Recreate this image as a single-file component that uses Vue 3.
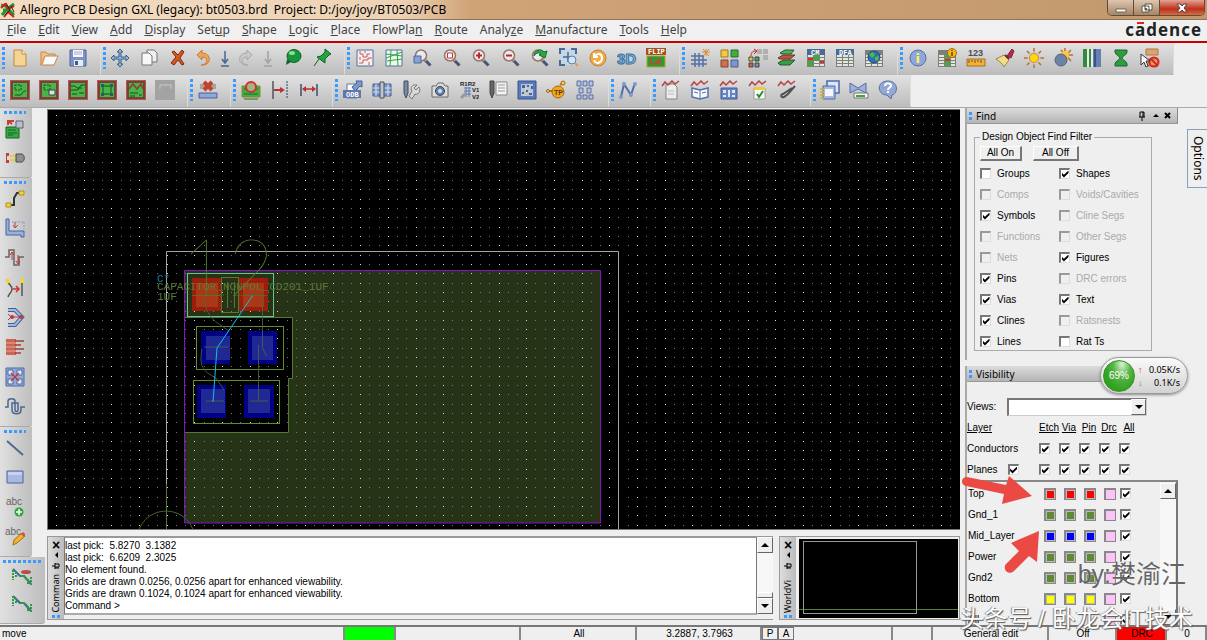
<script setup>
import { ref } from 'vue'

const menus = [
    ['', 'F', 'ile'], ['', 'E', 'dit'], ['', 'V', 'iew'], ['', 'A', 'dd'], ['', 'D', 'isplay'],
    ['Set', 'u', 'p'], ['', 'S', 'hape'], ['', 'L', 'ogic'], ['', 'P', 'lace'], ['FlowPla', 'n', ''],
    ['', 'R', 'oute'], ['Analy', 'z', 'e'], ['', 'M', 'anufacture'], ['', 'T', 'ools'], ['', 'H', 'elp']
]

// shared pieces of the icons, all on a 20 x 20 grid
const lens = '<path d="M11.5 11.5l6 6" stroke="#3f567f" stroke-width="3"/><path d="M12 11l1.5 1.5" stroke="#e8a050" stroke-width="3"/><circle cx="8" cy="7.5" r="5.5" fill="#e3ecf5" stroke="#9a7464" stroke-width="1.5"/>'
const board = '<path d="M0 0h20v20H0z" fill="#b5564c"/><path d="M1 1h18v18H1z" fill="#71433a"/><path d="M3 3h14v14H3z" fill="#49b549"/>'
const table = '<path d="M1 2h18v17H1z" fill="#7b8179"/><path d="M2 7h5v2H2zm6 0h5v2H8zm6 0h4v2h-4zM2 10h5v2H2zm6 0h5v2H8zm6 0h4v2h-4zM2 13h5v2H2zm6 0h5v2H8zm6 0h4v2h-4zM2 16h5v2H2zm6 0h5v2H8zm6 0h4v2h-4z" fill="#e4e5df"/>'
const wave = '<path d="M1 6l3-4 3 3 4-4 3 3 4-3" fill="none" stroke="#b8444a" stroke-width="1.5"/>'

const icons = {
    new: '<path d="M4 2h8l4 4v12H4z" fill="#f7d493" stroke="#b98b42"/><path d="M12 2v4h4" fill="#fff3d6" stroke="#b98b42"/>',
    open: '<path d="M2 17V4h5l2 2h7v3" fill="#f2c084" stroke="#c18b51"/><path d="M2 17L6 8h13l-4 9z" fill="#f9fafa" stroke="#bd8653"/><path d="M3 16L5 10" stroke="#ee9e47" stroke-width="2"/>',
    save: '<path d="M2 2h16v16H2z" fill="#7d93c8" stroke="#4c6395"/><path d="M5 2h10v7H5z" fill="#f5f7fb"/><path d="M6 4h8M6 6h8" stroke="#aab"/><path d="M6 12h9v6H6z" fill="#e7ebf4"/><path d="M7 13h3v4H7z" fill="#455b87"/>',
    move: '<path d="M10 1l3 3h-2v5h5V7l3 3-3 3v-2h-5v5h2l-3 3-3-3h2v-5H4v2l-3-3 3-3v2h5V4H7z" fill="#8fb4dc" stroke="#3f608a"/>',
    copy: '<path d="M8 2h7l3 3v9H8z" fill="#eee" stroke="#777"/><path d="M3 5h7l3 3v9H3z" fill="#f8f8f8" stroke="#777"/>',
    delete: '<path d="M4 4l2-1 4 4 4-5 2 2-4 6 4 6-2 1-4-5-4 5-3-2 5-6z" fill="#d4571c" stroke="#7e2a0b"/>',
    undo: '<path d="M8 17c7 0 8-8 1-8v3L4 7l5-5v3c10 0 10 13-1 12z" fill="#f0a15a" stroke="#c77a38"/>',
    undoDown: '<path d="M10 3v11M7 11l3 4 3-4M6 18h8" fill="none" stroke="#45678d" stroke-width="1.5"/>',
    redo: '<path d="M12 17c-7 0-8-8-1-8v3l5-5-5-5v3C1 5 1 18 12 17z" fill="#c9c9c9" stroke="#a7a7a7"/>',
    redoDown: '<path d="M10 3v11M7 11l3 4 3-4M6 18h8" fill="none" stroke="#a3a3a3" stroke-width="1.5"/>',
    ball: '<ellipse cx="11" cy="8" rx="7" ry="6.5" fill="#16963a" stroke="#08641e"/><ellipse cx="9" cy="5" rx="3" ry="2" fill="#8bdc92"/><path d="M3 17l5-3-4-3z" fill="#175f24"/>',
    pin: '<path d="M2 18l5-7M13 1l6 5-2 1-4 4v4L5 9l4-1 4-4z" fill="#22a53e" stroke="#0c6020"/>',
    gridRed: '<path d="M2 2h16v16H2z" fill="#f6efef" stroke="#52709d"/><path d="M5 3v3h3v3h4V6h3M4 15h4v-3h5v-2h4M14 17v-3M5 9v3M10 3v2" fill="none" stroke="#c8595c"/>',
    gridGreen: '<path d="M2 2h16v16H2z" fill="#effaee" stroke="#52709d"/><path d="M2 6l16 2M3 13l15-2M7 2l-1 16M13 2l1 16M2 10l16-6" fill="none" stroke="#2ea147"/>',
    zoomRegion: lens + '<path d="M1 8h7v7H1z" fill="#89a2d3" stroke="#4c679d"/>',
    zoomFit: lens + '<path d="M5.500 5h5v5h-5z" fill="#fff" stroke="#c33"/>',
    zoomIn: lens + '<path d="M5 7.500h6M8 4.500v6" stroke="#cc2222" stroke-width="2"/>',
    zoomOut: lens + '<path d="M5 7.500h6" stroke="#cc2222" stroke-width="2"/>',
    zoomPrev: lens + '<path d="M4 8c0-6 7-8 10-4l3-1-2 7-6-3 2-1c-2-2-5-1-7 2z" fill="#2ba64a" stroke="#12702b"/>',
    zoomCenter: '<path d="M1 1h17v16H1z" fill="#c4d5e6"/><path d="M1 6V1h5M12 1h5v5M1 12v5h5" fill="none" stroke="#466b95" stroke-width="2"/><path d="M9 4v10M4 9h10" stroke="#466b95" stroke-width="1.500"/><circle cx="13" cy="12" r="4" fill="#cfe5f8" stroke="#5c7fa8"/><path d="M16 15l3 3" stroke="#e19a4b" stroke-width="2"/>',
    refresh: '<circle cx="10" cy="10" r="8" fill="#f2aa45" stroke="#c57d32"/><path d="M6 12c2 5 8 3 8-2s-5-5-7-2M6 5v4h4" fill="none" stroke="#fff" stroke-width="2"/>',
    threeD: '<text x="0" y="16" font-family="Liberation Sans" font-size="15" font-weight="700" fill="#8dbfe8" stroke="#39719f">3D</text>',
    flip: '<path d="M0 0h20v7H0z" fill="#a0521f"/><text x="2" y="6" font-family="Liberation Mono" font-size="7" font-weight="700" fill="#fff">FLIP</text><path d="M1 8h18v11H1z" fill="#2c9b35" stroke="#b8a12a"/><path d="M5 10v3c0 4 8 4 9 0M14 10v4h-4" fill="none" stroke="#d53c30" stroke-width="1.500"/>',
    gridStar: '<path d="M5 5v14M9 5v14M13 7v12M1 8h13M1 12h16M1 16h16" stroke="#5671a5" stroke-width="1.500"/><path d="M16 1v7M12 4h8M13 1l6 7M19 1l-6 7" stroke="#d38a3a"/>',
    squares: '<path d="M2 2h7v7H2z" fill="#f6ca35" stroke="#9a7b2c"/><path d="M12 2h7v7h-7z" fill="#3faf3d" stroke="#2b6a2a"/><path d="M2 12h7v7H2z" fill="#cf714f" stroke="#81452f"/><path d="M12 12h7v7h-7z" fill="#7d95cb" stroke="#4b5f90"/>',
    swap: '<path d="M9 1h5v5H9zM15 1h5v5h-5zM15 7h5v5h-5z" fill="#b0b0b0"/><path d="M1 9h4v4H1z" fill="#e7c33f" stroke="#444"/><path d="M7 9h4v4H7z" fill="#45a344" stroke="#444"/><path d="M1 15h4v4H1z" fill="#cc6348" stroke="#444"/><path d="M7 15h4v4H7z" fill="#7790c5" stroke="#444"/><path d="M3 8c0-4 2-5 5-5M6 1l3 2-3 3" fill="none" stroke="#c22"/>',
    layers: '<path d="M1 15l5-3h12l-5 5H3z" fill="#399c42" stroke="#315532"/><path d="M1 10l5-3h12l-5 4H3z" fill="#c5523d" stroke="#6b3527"/><path d="M3 5l5-3h9l-3 4H5z" fill="#4eb556" stroke="#275f2b"/>',
    cm: table + '<path d="M1 1h18v6H1z" fill="#496b94"/><path d="M2 10h5v2H2zM14 13h4v2h-4z" fill="#e22"/><path d="M2 13h5v5H2zM8 7h5v5H8z" fill="#3cab3c"/><text x="5" y="7" font-family="Liberation Mono" font-size="7" font-weight="700" fill="#fff">CM</text>',
    dfa: table + '<path d="M1 1h18v6H1z" fill="#496b94"/><text x="4" y="7" font-family="Liberation Mono" font-size="7" font-weight="700" fill="#fff">DFA</text>',
    globe: table + '<circle cx="10" cy="9" r="6" fill="#2b71b5" stroke="#1c4a79"/><path d="M5 6l4-2 2 3-3 3zM11 9l4-1-1 5-3-1z" fill="#4eba4e"/>',
    info: '<circle cx="10" cy="10" r="8" fill="#8ea6dc" stroke="#586f9e"/><path d="M10 5v2M10 8v7" stroke="#fff06a" stroke-width="2.500"/>',
    tableInfo: table + '<path d="M8 7h5v11H8z" fill="#49a449"/><path d="M8 11h5v2H8z" fill="#dc3030"/><circle cx="15" cy="5" r="4.500" fill="#f7b61c" stroke="#a96c10"/><path d="M15 2v1M15 4v4" stroke="#734200" stroke-width="1.500"/>',
    measure: '<text x="2" y="8" font-family="Liberation Sans" font-size="9" font-weight="700" fill="#4e4e4e">123</text><path d="M1 11h18v7H1z" fill="#f3b13d" stroke="#a66e21"/><path d="M3 12v3M6 12v2M9 12v3M12 12v2M15 12v3" stroke="#764c12"/>',
    brush: '<path d="M12 8l5-7 2 2-3 7z" fill="#b7294c" stroke="#85203a"/><path d="M1 11l8-4 5 5-5 7c-1-3-4-5-8-8z" fill="#f1df84" stroke="#98874c"/><path d="M10 7l4 4" stroke="#72243a" stroke-width="2"/>',
    sun: '<path d="M10 0v20M0 10h20M3 3l14 14M17 3L3 17" stroke="#b8702f" stroke-width="1.500"/><circle cx="10" cy="10" r="6.500" fill="#ccc"/><circle cx="10" cy="10" r="4.500" fill="#ffd51c" stroke="#ce8f21"/>',
    sunDim: '<path d="M12 0v14M5 7h15M8 2l10 11M18 2L8 12" stroke="#b8702f" stroke-width="1.500"/><circle cx="12" cy="7" r="4" fill="#ffc738"/><circle cx="8" cy="12" r="6" fill="#6d82a5" stroke="#52647f"/>',
    stripes: '<path d="M1 1h18v18H1z" fill="#6580b3"/><path d="M1 1h4v18H1zM7 1h2v18H7z" fill="#318a40"/><path d="M5 1h2v18H5zM9 1h2v18H9z" fill="#e5ece4"/><path d="M13 1v18" stroke="#3d5482" stroke-width="2"/>',
    hourglass: '<path d="M4 2h12v2c0 3-5 4-5 6s5 3 5 6v2H4v-2c0-3 5-4 5-6S4 7 4 4z" fill="#2e9d40" stroke="#17662a"/>',
    noSelect: '<path d="M6 1h12v6H6zM8 11h10v7H8z" fill="#d9a76b" stroke="#ab7547"/><circle cx="14" cy="14" r="4.500" fill="none" stroke="#e22020" stroke-width="2"/><path d="M11 11l6 6" stroke="#e22020" stroke-width="2"/><path d="M1 6v11l3-3 2 5 2-1-2-5h4z" fill="#fff" stroke="#333"/>',
    b1: board + '<path d="M5 5h6v5H5z" fill="none" stroke="#174e1a" stroke-dasharray="2 1"/><path d="M5 15h5c3 0 1-4 6-4" fill="none" stroke="#174e1a"/>',
    b2: board + '<path d="M5 5h6v5H5z" fill="none" stroke="#174e1a" stroke-dasharray="2 1"/><path d="M10 10h6v5h-6z" fill="#dde0df" stroke="#3b4743"/>',
    b3: board + '<path d="M3 6h4l2 2h5M3 10h7l3-5h4M4 14h5M11 13h5" fill="none" stroke="#174e1a"/>',
    b4: board + '<path d="M6 6h8v8H6z" fill="none" stroke="#174e1a"/><path d="M4 4h3v3H4zM13 4h3v3h-3zM4 13h3v3H4zM13 13h3v3h-3z" fill="#2a5a5d"/>',
    b5: board + '<path d="M3 9l4-5 4 5 4-5 2 5" fill="none" stroke="#8e3b32" stroke-width="1.500"/><path d="M4 13h8M13 15h3M4 16h5" stroke="#174e1a"/>',
    blank: '<path d="M0 0h20v20H0z" fill="#a3a3a3"/><path d="M5 9V5h11v4" fill="none" stroke="#c6c6c6"/>',
    dropShape: '<path d="M2 4h16v5H2z" fill="#a3a3a3"/><path d="M6 2l8 8M14 2l-8 8" stroke="#c2422b" stroke-width="4"/><path d="M1 13h18v5H1z" fill="#92a7d9" stroke="#4b629a"/>',
    boardProbe: '<path d="M1 6h18v11H1z" fill="#3fae43" stroke="#8c8b2a"/><path d="M3 19h14M3 9h14M3 14h14" stroke="#217028"/><circle cx="10" cy="7" r="5" fill="#a5b381" stroke="#d03030" stroke-width="2"/>',
    toLine: '<path d="M3 1v18" stroke="#555" stroke-width="1.500"/><path d="M17 1v18" stroke="#27405f" stroke-dasharray="2 1"/><path d="M4 10h9" stroke="#b93131" stroke-width="2"/><path d="M10 7l5 3-5 3z" fill="#b93131"/>',
    width: '<path d="M2 4v12M18 4v12" stroke="#38506f" stroke-width="1.500"/><path d="M4 9h12" stroke="#b93131" stroke-width="1.500"/><path d="M7 6L3 9l4 3zM13 6l4 3-4 3z" fill="#b93131"/>',
    odb: '<path d="M4 4h10v14H4z" fill="#fafafa" stroke="#65799c"/><path d="M9 7l5-4-1-2h6v6l-2-1-5 5z" fill="#7b9ac9" stroke="#466192"/><path d="M0 10h18v8H0z" fill="#5d79ab"/><text x="3" y="17" font-family="Liberation Mono" font-size="7" font-weight="700" fill="#fff">ODB</text>',
    columns: '<path d="M1 4h18v12H1z" fill="#7d94c6" stroke="#45608f"/><path d="M1 8h18M1 12h18M4 4v12M16 4v12" stroke="#d4dff4"/><path d="M8 2h4v16H8z" fill="#bdc6d0" stroke="#48515e"/>',
    tools: '<path d="M3 1h4v12l-2 5-2-5z" fill="#788aa7" stroke="#434c5d"/><path d="M18 7l-3 3-2-2 3-3c-5-1-7 3-5 6l-3 5 3 3 3-5c4 1 6-3 4-7z" fill="#d9d9d9" stroke="#787878"/>',
    camera: '<path d="M2 6h4l2-3h5l2 3h3v11H2z" fill="#dcdcdc" stroke="#686868"/><circle cx="10" cy="11" r="4.500" fill="#6482af" stroke="#3d4650"/><circle cx="10" cy="11" r="2" fill="#cfe4fa"/>',
    rename: '<text x="1" y="6" font-family="Liberation Sans" font-size="6" font-weight="700" fill="#222">R1R2</text><path d="M5 8h7M5 11h7M5 14h7M7 7v10M10 7v10" stroke="#5777b8"/><path d="M2 18l5-5" stroke="#999" stroke-width="3"/><text x="13" y="12" font-family="Liberation Sans" font-size="6" font-weight="700" fill="#222">V1</text><text x="13" y="19" font-family="Liberation Sans" font-size="6" font-weight="700" fill="#222">V2</text>',
    report: '<path d="M2 1h4v12l-2 5-2-5z" fill="#666" stroke="#444"/><path d="M8 2h11v13H8z" fill="#f4f4f4" stroke="#888"/><path d="M10 5h7M10 8h7M10 11h7" stroke="#999"/>',
    maze: '<path d="M1 1h18v18H1z" fill="#5a79b8" stroke="#38558f"/><path d="M4 4h12v12H4z" fill="#b9c6de"/><path d="M5 5h3v3H5zm5 0h2v2h-2zm4 1h2v3h-2zm-5 4h2v2H9zm-4 2h2v2H5zm7 1h3v2h-3z" fill="#4c6494"/><path d="M8 8h2v2H8zm4 3h2v1h-2zM6 15h3v1H6z" fill="#e8d87c"/>',
    testPoint: '<path d="M0 11h8M14 5l4-3" stroke="#b56f1d" stroke-width="2"/><circle cx="12" cy="12" r="6" fill="#f0a91f" stroke="#a86512"/><circle cx="17" cy="3" r="2" fill="#ffd24a" stroke="#a86512"/><circle cx="2" cy="11" r="1.500" fill="#ffd24a" stroke="#a86512"/><text x="8" y="15" font-family="Liberation Sans" font-size="7" font-weight="700" fill="#603600">TP</text>',
    array: '<path d="M2 1h4v5H2zm6 0h4v5H8zm6 0h4v5h-4zM4 8h4v5H4zm8 0h4v5h-4zM2 15h4v4H2zm6 0h4v4H8zm6 0h4v4h-4z" fill="#b3c2e6" stroke="#5a6f9c"/>',
    net: '<path d="M3 17L6 4l7 11 4-12" fill="none" stroke="#516fa9" stroke-width="2"/><circle cx="3" cy="17" r="2" fill="#7f9bd2"/><circle cx="6" cy="4" r="2" fill="#7f9bd2"/><circle cx="13" cy="15" r="2" fill="#7f9bd2"/><circle cx="17" cy="4" r="2" fill="#7f9bd2"/>',
    waveDoc: '<path d="M5 4h8l3 3v12H5z" fill="#ececec" stroke="#848484"/><path d="M7 11h6M7 14h6" stroke="#bbb"/>' + wave,
    waveBook: '<path d="M2 8l8 2 8-2v9l-8 2-8-2z" fill="#f6f8fc" stroke="#5471a8" stroke-width="1.500"/><path d="M10 10v8M4 12l4 1M12 13l4-1" stroke="#5471a8"/>' + wave,
    waveFilm: '<path d="M2 8h16v11H2z" fill="#6886c6" stroke="#415c91"/><path d="M4 10h3v3H4zm5 0h2v7H9zm4 0h3v3h-3zM4 15h3v2H4zm9 0h3v2h-3z" fill="#dce7fb"/>' + wave,
    waveCheck: '<path d="M6 8h11v11H6z" fill="#fbfbf3" stroke="#999"/><path d="M6 7h11v3H6z" fill="#f0c940"/><path d="M9 14l2 3 4-6" fill="none" stroke="#278d35" stroke-width="2"/>' + wave,
    waveProbe: '<path d="M18 6l-7 8-4 3c-3 1-4-2-1-3l9-6" fill="none" stroke="#505050" stroke-width="2"/>' + wave,
    windows: '<path d="M7 1h12v12H7z" fill="#dce5f7" stroke="#4d6aa4" stroke-width="1.500"/><path d="M3 6h12v13H3z" fill="#a8b9df" stroke="#4d6aa4"/><path d="M5 9h8v7H5z" fill="#f4f6fc"/><path d="M0 9h4M0 12h4M0 15h4M0 18h4" stroke="#d3aa30" stroke-width="1.500"/>',
    bowtie: '<path d="M1 3l8 5 8-5v10l-8-4-8 4z" fill="#9cb1de" stroke="#57719f"/><path d="M5 13h14v5H5z" fill="#f5f5f5" stroke="#777"/><path d="M7 15h9v2H7z" fill="#38a841"/>',
    help: '<path d="M10 1c11 0 10 13 4 14l-1 4-4-4C-1 15-2 1 10 1z" fill="#93a8d6" stroke="#566f9f"/><path d="M7 6c0-4 7-3 6 0-1 2-3 2-3 4M10 11v2" fill="none" stroke="#fff" stroke-width="2"/>',
    placeManual: '<path d="M1 8h13v11H1z" fill="#36a845" stroke="#1d6228"/><path d="M3 11h8M3 14h9M3 16h5" stroke="#1d6228"/><path d="M11 2h7v7h-7z" fill="#b8c0cb" stroke="#5b6573"/><path d="M3 6V2h6M3 2l4 3" fill="none" stroke="#c33f35" stroke-width="2"/>',
    plug: '<path d="M1 5h3v3H2v4h2v3H1z" fill="#c23f3d"/><path d="M5 8h6M5 12h6" stroke="#eccb3c" stroke-width="2"/><path d="M11 6h6c3 1 3 7 0 8h-6z" fill="#8f8f8f" stroke="#494949"/>',
    connect: '<path d="M4 16h5V9l3-5h5" fill="none" stroke="#333" stroke-width="2"/><path d="M1 14h5v4H1zM14 2h5v4h-5z" fill="#f3d335" stroke="#b09018"/>',
    slide: '<path d="M1 1h3v12h15v6h-3v-2H1z" fill="#9bafdd" stroke="#47669d"/><path d="M7 4h12v7" fill="none" stroke="#8796c2" stroke-dasharray="2 1"/><path d="M10 4v6M8 7l2 3 3-3" fill="none" stroke="#b14454"/>',
    delay: '<path d="M0 9h4V2h5v15h5V9h5" fill="none" stroke="#666" stroke-width="1.500"/><path d="M7 12V5M13 7v7M5 7l2-3 2 3M11 13l2 3 2-3" fill="none" stroke="#bf3434"/>',
    spread: '<path d="M3 3c1 5 4 4 4 8s-3 4-4 8M17 3v15" fill="none" stroke="#555" stroke-width="1.500"/><path d="M8 11h6M11 8l3 3-3 3" fill="none" stroke="#c33" stroke-width="1.500"/><path d="M1 1h4v4H1zM15 1h4v4h-4z" fill="#f3d335"/>',
    bend: '<path d="M3 3h7l7 7-7 8H3" fill="none" stroke="#436291" stroke-width="4"/><path d="M3 3h7l7 7-7 8H3" fill="none" stroke="#a4b8e3" stroke-width="2"/><path d="M3 7l3 3-3 3M6 10h9" fill="none" stroke="#bd3644"/><circle cx="7" cy="10" r="2" fill="#bd3644"/><circle cx="16" cy="10" r="2" fill="#bd3644"/>',
    fanout: '<path d="M1 2h10v16H1z" fill="#cb6553"/><path d="M10 4h9M10 8h6M10 12h9M10 16h6" stroke="#a2402e" stroke-width="1.500"/><path d="M1 6h10M1 10h10M1 14h10" stroke="#e0a79a"/>',
    spider: '<path d="M1 1h18v18H1z" fill="#91a9db" stroke="#4d6b9f"/><path d="M3 3h5v5H3zm9 0h5v5h-5zM3 12h5v5H3zm9 0h5v5h-5z" fill="#e3e9f6" stroke="#4d6b9f"/><path d="M6 6l8 8M14 6l-8 8" stroke="#c43939" stroke-width="1.500"/>',
    snake: '<path d="M0 11h3V5c0-3 7-3 7 0v9c0 2 3 2 3 0V7H7v7c0 5 9 5 9 0v-3h4" fill="none" stroke="#4b678e" stroke-width="1.500"/>',
    line: '<path d="M2 3l16 14" stroke="#4f6993" stroke-width="2"/>',
    rect: '<path d="M2 4h16v12H2z" fill="#a9b9e2" stroke="#4c6599"/><path d="M3 5h14v3H3z" fill="#c7d2ef"/>',
    textAdd: '<text x="1" y="8" font-family="Liberation Sans" font-size="10" fill="#666">abc</text><circle cx="14" cy="15" r="4.500" fill="#2ea43a"/><path d="M11 15h6M14 12v6" stroke="#fff" stroke-width="1.500"/>',
    textEdit: '<text x="0" y="9" font-family="Liberation Sans" font-size="10" fill="#666">abc</text><path d="M8 19l1-5 8-7 3 3-8 7z" fill="#f3b52a" stroke="#a86c18"/><path d="M17 7l3 3" stroke="#d4504a" stroke-width="3"/>',
    ratOn: '<path d="M1 2l7 7h4l7 8" fill="none" stroke="#4a66a0" stroke-width="2"/><path d="M8 9h4l3 4" fill="none" stroke="#2f9b43" stroke-width="2"/><path d="M1 3v10M4 5v5M19 10v9M16 12v6" stroke="#2f9b43" stroke-width="2" stroke-dasharray="2 1"/><ellipse cx="14" cy="5" rx="5" ry="2" fill="#bd4a44"/>',
    ratOff: '<path d="M1 2l7 7h4l7 8" fill="none" stroke="#2f9b43" stroke-width="2"/><path d="M2 3l6 6M13 10l5 6" stroke="#4a66a0" stroke-width="2"/><path d="M1 2v10M4 4v5M19 10v9M16 12v6" stroke="#2f9b43" stroke-width="2" stroke-dasharray="2 1"/>'
}

const narrow = ['undo', 'undoDown', 'redo', 'redoDown']

const toolbars = [
    [
        { width: 101, items: ['new', 'open', 'save'] },
        { width: 244, items: ['move', 'copy', 'delete', 'undo', 'undoDown', 'redo', 'redoDown', 'ball', 'pin'] },
        { width: 335, items: ['gridRed', 'gridGreen', 'zoomRegion', 'zoomFit', 'zoomIn', 'zoomOut', 'zoomPrev', 'zoomCenter', 'refresh', 'threeD', 'flip'] },
        { width: 218, items: ['gridStar', 'squares', 'swap', 'layers', 'cm', 'dfa', 'globe'] },
        { width: 276, items: ['info', 'tableInfo', 'measure', 'brush', 'sun', 'sunDim', 'stripes', 'hourglass', 'noSelect'] }
    ],
    [
        { width: 188, items: ['b1', 'b2', 'b3', 'b4', 'b5', 'blank'] },
        { width: 43, items: ['dropShape'] },
        { width: 102, items: ['boardProbe', 'toLine', 'width'] },
        { width: 276, items: ['odb', 'columns', 'tools', 'camera', 'rename', 'report', 'maze', 'testPoint', 'array'] },
        { width: 42, items: ['net'] },
        { width: 160, items: ['waveDoc', 'waveBook', 'waveFilm', 'waveCheck', 'waveProbe'] },
        { width: 100, items: ['windows', 'bowtie', 'help'] }
    ]
]

const sideGroups = [
    { height: 70, items: ['placeManual', 'plug'] },
    { height: 249, items: ['connect', 'slide', 'delay', 'spread', 'bend', 'fanout', 'spider', 'snake'] },
    { height: 130, items: ['line', 'rect', 'textAdd', 'textEdit'] },
    { height: 67, wide: true, items: ['ratOn', 'ratOff'] }
]

// drawing grid, every third column is a little brighter
function gridPath(bright) {
    let d = ''
    for (let col = 0; col < 98; col++) {
        if ((col % 3 === 0) !== bright) continue
        for (let row = 0; row < 45; row++) {
            d += `M${8 + Math.round(col * 9.22)} ${5.5 + Math.round(row * 9.31)}h1`
        }
    }
    return d
}
const dimDots = gridPath(false)
const brightDots = gridPath(true)

const filters = ref([
    { name: 'Groups', on: false }, { name: 'Shapes', on: true },
    { name: 'Comps', off: true }, { name: 'Voids/Cavities', off: true },
    { name: 'Symbols', on: true }, { name: 'Cline Segs', off: true },
    { name: 'Functions', off: true }, { name: 'Other Segs', off: true },
    { name: 'Nets', off: true }, { name: 'Figures', on: true },
    { name: 'Pins', on: true }, { name: 'DRC errors', off: true },
    { name: 'Vias', on: true }, { name: 'Text', on: true },
    { name: 'Clines', on: true }, { name: 'Ratsnests', off: true },
    { name: 'Lines', on: true }, { name: 'Rat Ts', on: false }
])

const columns = ['Etch', 'Via', 'Pin', 'Drc', 'All']
const layers = [
    { name: 'Top', color: 'red' },
    { name: 'Gnd_1', color: 'green' },
    { name: 'Mid_Layer', color: 'blue' },
    { name: 'Power', color: 'green' },
    { name: 'Gnd2', color: 'green' },
    { name: 'Bottom', color: 'yellow' },
    { name: 'All', color: 'none' }
]

const log = [
    'last pick:  5.8270  3.1382',
    'last pick:  6.6209  2.3025',
    'No element found.',
    'Grids are drawn 0.0256, 0.0256 apart for enhanced viewability.',
    'Grids are drawn 0.1024, 0.1024 apart for enhanced viewability.',
    'Command >'
]
</script>

<template>
    <div class="window">
        <header class="title-bar">
            <svg class="app-icon" viewBox="0 0 16 16">
                <path d="M1 3l5 1 3 4 5 5M2 13l5-6 7-5M3 8h4" stroke="#14a02a" stroke-width="3" fill="none" />
                <path d="M1 6l4-4 3 5 6-3M4 15l4-5 6 5" stroke="#d81e1e" stroke-width="2" fill="none" />
                <path d="M6 1l4 7-5 5M11 4l3 6" stroke="#222" fill="none" />
            </svg>
            <h1>Allegro PCB Design GXL (legacy): bt0503.brd&nbsp; Project: D:/joy/joy/BT0503/PCB</h1>
            <div class="window-buttons">
                <button aria-label="Minimize"><svg viewBox="0 0 12 10"><path d="M1 6h10v3H1z" fill="#fff" stroke="#665" /></svg></button>
                <button aria-label="Restore"><svg viewBox="0 0 12 10"><path d="M4 1h7v6H4zM1 3h7v6H1z" fill="#fff" stroke="#554" /><path d="M4 5h2v2H4z" fill="#654" /></svg></button>
                <button class="close" aria-label="Close"><svg viewBox="0 0 12 10"><path d="M1 1h3l2 2 2-2h3L8 5l3 4H8L6 7 4 9H1l3-4z" fill="#fff" stroke="#544" /></svg></button>
            </div>
        </header>

        <nav class="menu-bar">
            <a v-for="menu in menus" :key="menu.join('')" href="#">{{ menu[0] }}<u>{{ menu[1] }}</u>{{ menu[2] }}</a>
            <span class="brand">c<span class="bar-letter">a</span>dence</span>
        </nav>

        <div class="toolbars">
            <div v-for="(bar, i) in toolbars" :key="i" class="toolbar">
                <div v-for="(group, j) in bar" :key="j" class="tool-group" :style="{ width: group.width + 'px' }">
                    <span class="handle"></span>
                    <button v-for="name in group.items" :key="name" :class="{ narrow: narrow.includes(name) }" :aria-label="name">
                        <svg viewBox="0 0 20 20" v-html="icons[name]"></svg>
                    </button>
                </div>
            </div>
        </div>

        <div class="body">
            <aside class="side-tools">
                <div v-for="(group, i) in sideGroups" :key="i" class="side-group" :class="{ wide: group.wide }" :style="{ height: group.height + 'px' }">
                    <span class="handle flat"></span>
                    <button v-for="name in group.items" :key="name" :aria-label="name">
                        <svg viewBox="0 0 20 20" v-html="icons[name]"></svg>
                    </button>
                </div>
            </aside>

            <main class="center">
                <div class="canvas">
                    <svg class="drawing">
                        <g transform="translate(-48 -110)">
                            <rect x="185" y="270" width="415" height="253" fill="#263317" />
                            <path d="M185 317h107v61h-3v54H185z" fill="#000" />
                        </g>
                        <path :d="dimDots" stroke="#777" />
                        <path :d="brightDots" stroke="#ddd" />
                        <g transform="translate(-48 -110)" fill="none">
                            <path d="M166.500 530V251.500H618.500V530" stroke="#a4a4a4" />
                            <path d="M184.500 523V270.500H600.500V523z" stroke="#8a10c8" />
                            <path d="M185 317.500h107.500v61h-4v54H185" stroke="#55792f" />
                            <path d="M166.500 484v46" stroke="#55792f" />
                            <circle cx="166" cy="540" r="29" stroke="#466428" />
                            <rect x="192" y="278" width="30" height="33" fill="#9c1d0c" />
                            <rect x="239" y="278" width="29" height="33" fill="#9c1d0c" />
                            <rect x="196" y="283" width="22" height="24" fill="#a93816" />
                            <rect x="243" y="283" width="21" height="24" fill="#a93816" />
                            <rect x="221.500" y="277.500" width="17" height="35" stroke="#55792f" />
                            <path d="M227.500 282v26M234.500 282v26" stroke="#55792f" />
                            <rect x="187.500" y="273.500" width="86" height="43" stroke="#65c49b" />
                            <rect x="201" y="331" width="29" height="33" fill="#000085" />
                            <rect x="248" y="331" width="29" height="33" fill="#000085" />
                            <rect x="206" y="336" width="24" height="24" fill="#202894" />
                            <rect x="252" y="336" width="21" height="24" fill="#202894" />
                            <rect x="196.500" y="326.500" width="87" height="43" stroke="#628b37" />
                            <rect x="197" y="385" width="29" height="33" fill="#000085" />
                            <rect x="244" y="385" width="30" height="33" fill="#000085" />
                            <rect x="201" y="389" width="24" height="24" fill="#202894" />
                            <rect x="248" y="389" width="22" height="24" fill="#202894" />
                            <rect x="193.500" y="380.500" width="86" height="43" stroke="#628b37" />
                            <path d="M262.500 296v52l4 8M258.500 345v56M205 296c-2 12 5 22 14 28l10 7M202 349c-3 16 0 22 14 29l8 12M208 295h16M244 295h20M204 347h24M206 401h18M250 401h18" stroke="#4c6a3c" opacity="0.8" />
                            <path d="M253 295l-36 53-4 54" stroke="#18bce4" />
                            <text class="pin-number" x="181" y="296">1</text>
                            <text class="pin-number" x="228" y="296">2</text>
                            <text class="refdes" x="157" y="282">C*</text>
                            <text class="silk" x="157" y="290">CAPACITOR_NONPOL_CD201_1UF</text>
                            <text class="silk" x="157" y="300">1UF</text>
                        </g>
                    </svg>
                </div>

                <div class="bottom">
                    <section class="command">
                        <div class="strip">
                            <button aria-label="Close">×</button><span class="tri-left"></span>
                            <svg class="strip-pin" viewBox="0 0 8 8"><path d="M0 4h3M3 1v6M3 2h4v3H3M3 6h4" fill="none" stroke="#000" /></svg>
                            <span class="strip-title">Comman</span><span class="handle flat"></span>
                        </div>
                        <div class="log"><p v-for="line in log" :key="line">{{ line }}</p></div>
                        <div class="scrollbar">
                            <button aria-label="Scroll up"><span class="tri-up"></span></button>
                            <span class="track"></span>
                            <span class="thumb"></span>
                            <button aria-label="Scroll down"><span class="tri-down"></span></button>
                        </div>
                    </section>
                    <section class="world">
                        <div class="strip">
                            <button aria-label="Close">×</button><span class="tri-left"></span>
                            <svg class="strip-pin" viewBox="0 0 8 8"><path d="M0 4h3M3 1v6M3 2h4v3H3M3 6h4" fill="none" stroke="#000" /></svg>
                            <span class="strip-title">WorldVi</span><span class="handle flat"></span>
                        </div>
                        <svg class="world-view">
                            <path d="M0 70.500h200" stroke="#587d33" />
                            <rect x="4.500" y="2.500" width="113" height="72" fill="none" stroke="#999" />
                        </svg>
                    </section>
                </div>
            </main>

            <aside class="dock">
                <div class="panels">
                    <section class="panel find">
                        <h2><span class="grip"></span>Find
                            <span class="panel-actions">
                                <svg viewBox="0 0 34 10"><path d="M1 6h6M2 6V1h4v5M4 6v4M5 1v5" fill="none" stroke="#000" /><path d="M15 6l3-3 3 3z" /><path d="M27 2l5 5M32 2l-5 5" stroke="#000" stroke-width="2" /></svg>
                            </span>
                        </h2>
                        <fieldset>
                            <legend>Design Object Find Filter</legend>
                            <div class="filter-buttons"><button>All On</button><button>All Off</button></div>
                            <div class="filters">
                                <label v-for="item in filters" :key="item.name" :class="{ disabled: item.off }">
                                    <input v-model="item.on" type="checkbox" :disabled="item.off">{{ item.name }}
                                </label>
                            </div>
                        </fieldset>
                    </section>

                    <section class="panel visibility">
                        <h2><span class="grip"></span>Visibility</h2>
                        <div class="views">
                            <label for="views">Views:</label>
                            <div class="select-box">
                                <select id="views"><option></option></select>
                                <span class="drop"><span class="tri-down"></span></span>
                            </div>
                        </div>
                        <table>
                            <thead>
                                <tr><th class="name"><u>Layer</u></th><th v-for="col in columns" :key="col"><u>{{ col }}</u></th></tr>
                            </thead>
                            <tbody>
                                <tr>
                                    <td class="name">Conductors</td>
                                    <td v-for="col in columns" :key="col"><input type="checkbox" checked :aria-label="'Conductors ' + col"></td>
                                </tr>
                                <tr>
                                    <td class="name"><label class="planes">Planes <input type="checkbox" checked></label></td>
                                    <td v-for="col in columns" :key="col"><input type="checkbox" checked :aria-label="'Planes ' + col"></td>
                                </tr>
                            </tbody>
                        </table>
                        <div class="layer-list">
                            <table>
                                <tbody>
                                    <tr v-for="layer in layers" :key="layer.name">
                                        <td class="name">{{ layer.name }}</td>
                                        <td v-for="n in 3" :key="n"><button v-if="layer.color !== 'none'" class="swatch" :class="layer.color" :aria-label="layer.name + ' ' + columns[n - 1]"></button></td>
                                        <td><button class="swatch pink" :aria-label="layer.name + ' Drc'"></button></td>
                                        <td><input type="checkbox" checked :aria-label="layer.name + ' All'"></td>
                                    </tr>
                                </tbody>
                            </table>
                            <div class="scrollbar">
                                <button aria-label="Scroll up"><span class="tri-up"></span></button>
                                <span class="track"></span>
                                <button aria-label="Scroll down"><span class="tri-down"></span></button>
                            </div>
                        </div>
                    </section>
                </div>
                <button class="options-tab">Options</button>

                <svg class="arrows" viewBox="0 0 90 110">
                    <g fill="#ea4a43">
                        <path d="M7 1L46 9 49 0 72 20 42 28 44 18 6 10A4 4 0 0 1 7 1z" />
                        <path d="M46 88L59 75 51 67 79 55 77 86 69 80 54 95A5 5 0 0 1 46 88z" />
                    </g>
                </svg>
                <div class="net-speed">
                    <span class="percent">69%</span>
                    <span class="rates">
                        <span><b class="up">↑</b>0.05K/s</span>
                        <span><b class="down">↓</b>0.1K/s</span>
                    </span>
                </div>
            </aside>
        </div>

        <footer class="status-bar">
            <span class="cell command-name">move</span>
            <span class="cell busy"></span>
            <span class="cell w124"></span>
            <span class="cell w115">All</span>
            <span class="cell w124">3.2887, 3.7963</span>
            <button>P</button>
            <button>A</button>
            <span class="cell w98"></span>
            <span class="cell w40"></span>
            <span class="cell w115">General edit</span>
            <span class="cell w68">Off</span>
            <span class="cell drc">DRC</span>
            <span class="cell w40">0</span>
        </footer>

        <div class="author">by:樊渝江</div>
        <div class="watermark">头条号 / 卧龙会IT技术</div>
    </div>
</template>

<style>
body {
    margin: 0;
}
</style>

<style scoped>
.window {
    position: relative;
    display: flex;
    flex-direction: column;
    height: 100vh;
    overflow: hidden;
    background-color: #efefef;
    font-family: 'Liberation Sans', 'Noto Sans CJK SC', sans-serif;
    font-size: 10px;
    line-height: 12px;
    color: #000;
}

* {
    box-sizing: border-box;
}

button {
    padding: 0;
    border: 0;
    background: none;
    font: inherit;
    color: inherit;
}

/* title bar */
.title-bar {
    display: flex;
    align-items: center;
    flex: none;
    height: 20px;
    background: linear-gradient(90deg, #f3dcc2 0, #edd3b5 400px, #d0a377 470px, #c1986d 100%);
    border-bottom: 1px solid #8f7358;
}

.app-icon {
    width: 16px;
    height: 16px;
}

h1 {
    flex: 1;
    margin: 0 0 0 4px;
    font-family: 'Noto Sans', sans-serif;
    font-size: 12px;
    font-weight: 400;
    line-height: 18px;
    white-space: nowrap;
}

.window-buttons {
    display: flex;
    align-self: flex-start;
    height: 16px;
    margin-right: 2px;
    border: 1px solid #614a38;
    border-top: 0;
    border-radius: 0 0 5px 5px;
    overflow: hidden;
}

.window-buttons button {
    width: 26px;
    background: linear-gradient(#ddc6b0, #a78464);
    border-right: 1px solid #614a38;
}

.window-buttons .close {
    width: 44px;
    border: 0;
    background: linear-gradient(#e2a394, #bd3019 60%, #d66d45);
}

.window-buttons svg {
    display: block;
    width: 12px;
    height: 10px;
    margin: auto;
}

/* menu */
.menu-bar {
    display: flex;
    align-items: center;
    flex: none;
    gap: 12px;
    height: 23px;
    padding: 0 5px 1px 7px;
    background-color: #f0f0f0;
    border-bottom: 2px solid #c80000;
    font-family: 'Noto Sans', sans-serif;
    font-size: 12px;
    line-height: 16px;
}

.menu-bar a {
    color: #444;
    text-decoration: none;
}

.brand {
    margin-left: auto;
    font-family: 'Open Sans', sans-serif;
    font-size: 17px;
    font-weight: 700;
    letter-spacing: 1px;
    color: #222;
}

.bar-letter {
    background: linear-gradient(#d22, #d22) 2px 4px / 7px 2px no-repeat;
}

/* toolbars */
.toolbar {
    display: flex;
    height: 32px;
}

.tool-group {
    display: flex;
    align-items: center;
    padding: 0 8px 2px 2px;
    background: linear-gradient(#e2e2e2, #bdbdbd);
    border-right: 1px solid #ddd;
    border-bottom: 1px solid #bcbcbc;
}

.handle {
    flex: none;
    width: 3px;
    height: 22px;
    background: repeating-linear-gradient(#3a9bff 0 3px, transparent 3px 5px);
}

.handle.flat {
    width: 22px;
    height: 3px;
    background: repeating-linear-gradient(90deg, #3a9bff 0 3px, transparent 3px 5px);
}

.tool-group button {
    flex: 4;
    min-width: 0;
}

.tool-group .narrow {
    flex: 3;
}

.tool-group svg,
.side-group svg {
    display: block;
    width: 20px;
    height: 20px;
    margin: auto;
}

/* side tools */
.body {
    display: flex;
    flex: 1;
    min-height: 0;
    border-top: 1px solid #aaa;
}

.side-tools {
    flex: none;
    width: 47px;
}

.side-group {
    display: flex;
    flex-direction: column;
    align-items: center;
    width: 32px;
    padding: 3px 2px 5px 0;
    background: linear-gradient(90deg, #e0e0e0, #bebebe);
    border-bottom: 1px solid #aaa;
    border-radius: 0 0 3px 0;
}

.side-group.wide {
    width: 45px;
}

.side-group.wide .handle {
    width: 38px;
}

.side-group button {
    flex: 1;
    min-height: 0;
}

/* drawing area */
.center {
    display: flex;
    flex-direction: column;
    flex: 1;
    min-width: 0;
    padding: 1px 0 5px;
}

.canvas {
    flex: 1;
    min-height: 0;
    border: 1px solid #777;
    border-right: 0;
    background-color: #000;
}

.drawing {
    display: block;
    width: 100%;
    height: 100%;
}

.pin-number {
    font-family: Lato, sans-serif;
    font-size: 80px;
    font-weight: 100;
    fill: #55792f;
}

.silk,
.refdes {
    font-family: 'Liberation Mono', monospace;
    font-size: 11px;
    fill: #5b7a3a;
}

.refdes {
    fill: #0e7f9e;
}

.bottom {
    display: flex;
    flex: none;
    gap: 6px;
    height: 90px;
    padding-top: 6px;
}

.command,
.world {
    display: flex;
    border: 1px solid #999;
}

.command {
    flex: 1;
    min-width: 0;
    border-right: 0;
}

.world {
    width: 181px;
}

.strip {
    display: flex;
    flex-direction: column;
    align-items: center;
    flex: none;
    width: 16px;
    padding: 1px 0;
    background: linear-gradient(90deg, #ddd, #bbb);
}

.strip button {
    font-size: 14px;
    font-weight: 700;
    line-height: 14px;
}

.strip .handle {
    width: 8px;
}

.strip-pin {
    flex: none;
    width: 8px;
    height: 8px;
    margin-top: 4px;
}

.strip-title {
    margin: auto 0 2px;
    font-family: 'Noto Sans', sans-serif;
    font-size: 9px;
    line-height: 12px;
    writing-mode: vertical-rl;
    transform: rotate(180deg);
}

.log {
    flex: 1;
    min-width: 0;
    margin-bottom: 4px;
    padding-top: 2px;
    overflow: hidden;
    background-color: #fff;
    border: 1px solid #777;
    border-top-color: #999;
    border-bottom: 2px solid #aaa;
}

.log p {
    margin: 0;
    white-space: pre;
}

.world-view {
    flex: 1;
    min-width: 0;
    height: 79px;
    margin: 2px 1px 2px 3px;
    background-color: #000;
}

/* scrollbars and arrows */
.scrollbar {
    display: flex;
    flex-direction: column;
    flex: none;
    width: 16px;
    background-color: #f7f7f7;
}

.command .scrollbar {
    margin-bottom: 5px;
}

.scrollbar button,
.thumb,
.drop {
    display: flex;
    align-items: center;
    justify-content: center;
    flex: none;
    height: 16px;
    background-color: #efefef;
    border: 1px solid #fff;
    border-right-color: #666;
    border-bottom-color: #666;
}

.thumb {
    height: 6px;
}

.track {
    flex: 1;
}

.tri-up,
.tri-down,
.tri-left {
    border: 4px solid transparent;
}

.tri-up {
    border-top: 0;
    border-bottom-color: #000;
}

.tri-down {
    border-bottom: 0;
    border-top-color: #000;
}

.tri-left {
    border-width: 3px;
    border-left: 0;
    border-right-color: #000;
}

/* dock */
.dock {
    position: relative;
    display: flex;
    flex: none;
    width: 247px;
    padding-left: 5px;
}

.panels {
    display: flex;
    flex-direction: column;
    flex: none;
    gap: 6px;
    width: 213px;
}

.panel {
    border-left: 2px solid #aaa;
}

.find {
    height: 252px;
}

.visibility {
    display: flex;
    flex-direction: column;
    flex: 1;
    min-height: 0;
    overflow: hidden;
}

h2 {
    display: flex;
    align-items: center;
    flex: none;
    gap: 4px;
    height: 16px;
    margin: 0;
    padding-left: 2px;
    background: linear-gradient(#dcdcdc, #b5b5b5);
    border-right: 1px solid #888;
    border-bottom: 1px solid #999;
    font-family: 'Noto Sans', sans-serif;
    font-size: 10px;
    font-weight: 400;
}

.grip {
    width: 3px;
    height: 8px;
    background: repeating-linear-gradient(#3a9bff 0 3px, transparent 3px 5px);
}

.panel-actions {
    margin-left: auto;
    padding-right: 5px;
}

.panel-actions svg {
    display: block;
    width: 34px;
    height: 10px;
}

fieldset {
    margin: 7px 26px 0 7px;
    padding: 0 0 0 5px;
    height: 220px;
    border: 1px solid #aaa;
}

legend {
    padding: 0 2px;
    white-space: nowrap;
}

.filter-buttons {
    display: flex;
    gap: 11px;
    margin-top: 3px;
}

.filter-buttons button {
    width: 42px;
    height: 15px;
    border: 1px solid #fff;
    border-right: 2px solid #777;
    border-bottom: 2px solid #777;
    line-height: 12px;
}

.filter-buttons button + button {
    width: 46px;
}

.filters {
    display: grid;
    grid-template-columns: 79px 1fr;
    padding-top: 2px;
}

.filters label {
    display: flex;
    align-items: center;
    gap: 6px;
    height: 21px;
    white-space: nowrap;
}

.filters .disabled {
    color: #aaa;
}

input[type="checkbox"] {
    appearance: none;
    display: grid;
    place-content: center;
    width: 11px;
    height: 11px;
    margin: 0;
    background-color: #fff;
    border: 1px solid #ddd;
    border-top: 2px solid #777;
    border-left: 2px solid #777;
}

input[type="checkbox"]:disabled {
    background-color: #efefef;
    border-top-color: #999;
    border-left-color: #999;
}

input[type="checkbox"]:checked::before {
    content: '';
    width: 7px;
    height: 7px;
    background-color: #000;
    clip-path: polygon(0 30%, 0 65%, 35% 100%, 100% 35%, 100% 0, 35% 60%);
}

.views {
    display: flex;
    align-items: center;
    flex: none;
    justify-content: space-between;
    height: 36px;
    padding: 14px 31px 0 0;
}

.select-box {
    position: relative;
    width: 140px;
    height: 18px;
}

.select-box select {
    appearance: none;
    width: 100%;
    height: 18px;
    border: 1px solid #ccc;
    border-top: 2px solid #777;
    border-left: 2px solid #777;
    border-radius: 0;
    background-color: #fff;
}

.drop {
    position: absolute;
    top: 1px;
    right: 1px;
    width: 15px;
    pointer-events: none;
}

table {
    flex: none;
    width: 172px;
    table-layout: fixed;
    border-collapse: collapse;
}

tr {
    height: 21px;
}

thead tr {
    height: 20px;
}

th,
td {
    width: 20px;
    padding: 0;
    font-weight: 400;
    text-align: center;
}

th {
    white-space: nowrap;
}

td input,
td .swatch {
    display: block;
    margin: 0 auto;
}

.name {
    width: 72px;
    text-align: left;
    vertical-align: middle;
}

.planes {
    display: flex;
    align-items: center;
    gap: 10px;
}

.planes input[type="checkbox"] {
    margin: 0;
}

.layer-list {
    display: flex;
    flex: 1;
    justify-content: space-between;
    min-height: 0;
    padding: 1px 0 0 1px;
    overflow: hidden;
    border-top: 2px solid #888;
    border-right: 2px solid #777;
}

.swatch {
    width: 12px;
    height: 12px;
    border: 2px solid #888;
    border-right-width: 1px;
    border-bottom-width: 1px;
    box-shadow: inset 0 0 0 1px #bbb;
}

.red {
    background-color: #f00;
}

.green {
    background-color: #5f8a33;
}

.blue {
    background-color: #00f;
}

.yellow {
    background-color: #ff0;
}

.pink {
    background-color: #fbc3f8;
    box-shadow: none;
}

.options-tab {
    width: 20px;
    height: 59px;
    margin: 21px 0 0 auto;
    border: 1px solid #8ba0b5;
    border-right: 0;
    font-family: 'Noto Sans', sans-serif;
    font-size: 12px;
    writing-mode: vertical-rl;
}

.arrows {
    position: absolute;
    top: 368px;
    left: 0;
    width: 90px;
    height: 110px;
}

.net-speed {
    position: absolute;
    top: 249px;
    right: 19px;
    display: flex;
    align-items: center;
    gap: 3px;
    width: 88px;
    height: 37px;
    padding: 0 7px 0 2px;
    background: linear-gradient(#fafafa, #d2d2d2);
    border: 1px solid #999;
    border-radius: 19px;
    box-shadow: 0 1px 3px #888;
}

.percent {
    width: 32px;
    height: 32px;
    background: radial-gradient(ellipse at 60% 10%, #d9f3d2 0, #56b548 35%, #31a11f 70%);
    border: 1px solid #379427;
    border-radius: 50%;
    font-size: 10px;
    line-height: 30px;
    text-align: center;
    color: #fff;
}

.rates {
    flex: 1;
    font-family: 'Noto Sans', sans-serif;
    font-size: 9px;
    line-height: 13px;
}

.rates span {
    display: flex;
    justify-content: space-between;
}

.up {
    color: #e33;
}

.down {
    color: #4a9a35;
}

/* status bar */
.status-bar {
    display: flex;
    flex: none;
    height: 15px;
    border-top: 2px solid #777;
    white-space: nowrap;
}

.cell {
    flex: none;
    padding-left: 2px;
    border-right: 2px solid #888;
    line-height: 13px;
    text-align: center;
}

.command-name {
    flex: 1;
    text-align: left;
}

.busy {
    width: 51px;
    background-color: #0f0;
}

.status-bar button {
    width: 16px;
    border: 1px solid #777;
}

.w124 {
    width: 125px;
}

.w115 {
    width: 116px;
}

.w98 {
    width: 99px;
}

.w40 {
    width: 40px;
}

.w68 {
    width: 68px;
}

.drc {
    width: 50px;
    background-color: #f00;
}

/* marks over the window */
.author {
    position: absolute;
    right: 21px;
    bottom: 50px;
    font-size: 25px;
    line-height: 32px;
    color: rgba(50, 50, 50, 0.75);
    text-shadow: 0 0 1px #fff;
}

.watermark {
    position: absolute;
    right: 14px;
    bottom: 6px;
    font-size: 24px;
    line-height: 30px;
    color: #fff;
    text-shadow: 1px 1px 1px #555, -1px 0 1px #888;
    white-space: nowrap;
}
</style>
